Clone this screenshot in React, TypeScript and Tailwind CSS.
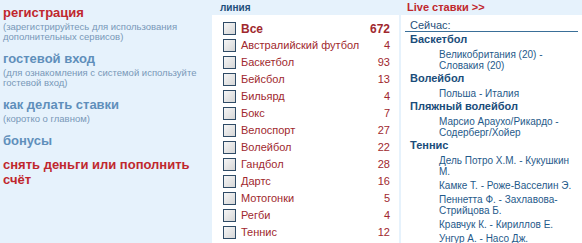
const sports = [
  { name: 'Все', count: 672, bold: true },
  { name: 'Австралийский футбол', count: 4 },
  { name: 'Баскетбол', count: 93 },
  { name: 'Бейсбол', count: 13 },
  { name: 'Бильярд', count: 4 },
  { name: 'Бокс', count: 7 },
  { name: 'Велоспорт', count: 27 },
  { name: 'Волейбол', count: 22 },
  { name: 'Гандбол', count: 28 },
  { name: 'Дартс', count: 16 },
  { name: 'Мотогонки', count: 5 },
  { name: 'Регби', count: 4 },
  { name: 'Теннис', count: 12 },
];

const live = [
  { sport: 'Баскетбол', games: ['Великобритания (20) - Словакия (20)'] },
  { sport: 'Волейбол', games: ['Польша - Италия'] },
  { sport: 'Пляжный волейбол', games: ['Марсио Араухо/Рикардо - Содерберг/Хойер'] },
  {
    sport: 'Теннис',
    games: [
      'Дель Потро Х.М. - Кукушкин М.',
      'Камке Т. - Роже-Васселин Э.',
      'Пеннетта Ф. - Захлавова-Стрийцова Б.',
      'Кравчук К. - Кириллов Е.',
      'Унгур А. - Насо Дж.',
    ],
  },
];

const menu = [
  { title: 'регистрация', note: '(зарегистрируйтесь для использования дополнительных сервисов)', red: true },
  { title: 'гостевой вход', note: '(для ознакомления с системой используйте гостевой вход)' },
  { title: 'как делать ставки', note: '(коротко о главном)' },
  { title: 'бонусы' },
  { title: 'снять деньги или пополнить счёт', red: true },
];

export default function App() {
  return (
    <div className="flex w-[582px] h-[243px] overflow-hidden bg-[#e6f2fc] font-['Liberation_Sans',sans-serif]">
      {/* left menu */}
      <div className="w-[211px] shrink-0 pl-[3px] pt-[5px] pr-2 flex flex-col gap-[9px]">
        {menu.map((m) => (
          <div key={m.title}>
            <div
              className={`text-[13px] leading-[15px] font-bold ${m.red ? 'text-[#c0272d]' : 'text-[#5f8fbb]'}`}
            >
              {m.title}
            </div>
            {m.note && (
              <div className="text-[9.5px] leading-[10px] text-[#7898b8] mt-[2px]">{m.note}</div>
            )}
          </div>
        ))}
      </div>

      {/* line */}
      <div className="w-[188px] shrink-0 flex flex-col">
        <div className="h-[15px] pl-[9px] text-[10px] leading-[15px] font-bold text-[#1d4e7a]">линия</div>
        <div className="flex-1 bg-white ml-[1px] pt-[5px] pl-[11px] pr-[9px]">
          {sports.map((s) => (
            <div key={s.name} className="flex items-center h-[17px]">
              <span className="w-[13px] h-[13px] border border-[#2f4b66] bg-gradient-to-br from-[#f6f6f6] to-[#d6d6d6] mr-[5px]" />
              <span
                className={`flex-1 text-[11px] text-[#a0282e] ${s.bold ? 'font-bold text-[12px]' : ''}`}
              >
                {s.name}
              </span>
              <span className={`text-[11px] text-[#a0282e] ${s.bold ? 'font-bold text-[12px]' : ''}`}>
                {s.count}
              </span>
            </div>
          ))}
        </div>
      </div>

      {/* live */}
      <div className="flex-1 flex flex-col ml-[2px]">
        <div className="h-[15px] pl-[6px] text-[11px] leading-[15px] font-bold text-[#c0272d]">Live ставки &gt;&gt;</div>
        <div className="flex-1 bg-white pl-[4px] pr-[4px] pt-[4px]">
          <div className="border-b border-[#3a6f98] pl-[5px] text-[11px] leading-[12px] text-[#1f4f7a]">
            Сейчас:
          </div>
          {live.map((g) => (
            <div key={g.sport} className="pl-[5px]">
              <div className="text-[11px] font-bold leading-[14px] text-[#1a4d7a]">{g.sport}</div>
              {g.games.map((t) => (
                <div key={t} className="pl-[29px] text-[10px] leading-[11px] text-[#1f5a8a] mt-[3px]">
                  {t}
                </div>
              ))}
            </div>
          ))}
        </div>
      </div>
    </div>
  );
}
